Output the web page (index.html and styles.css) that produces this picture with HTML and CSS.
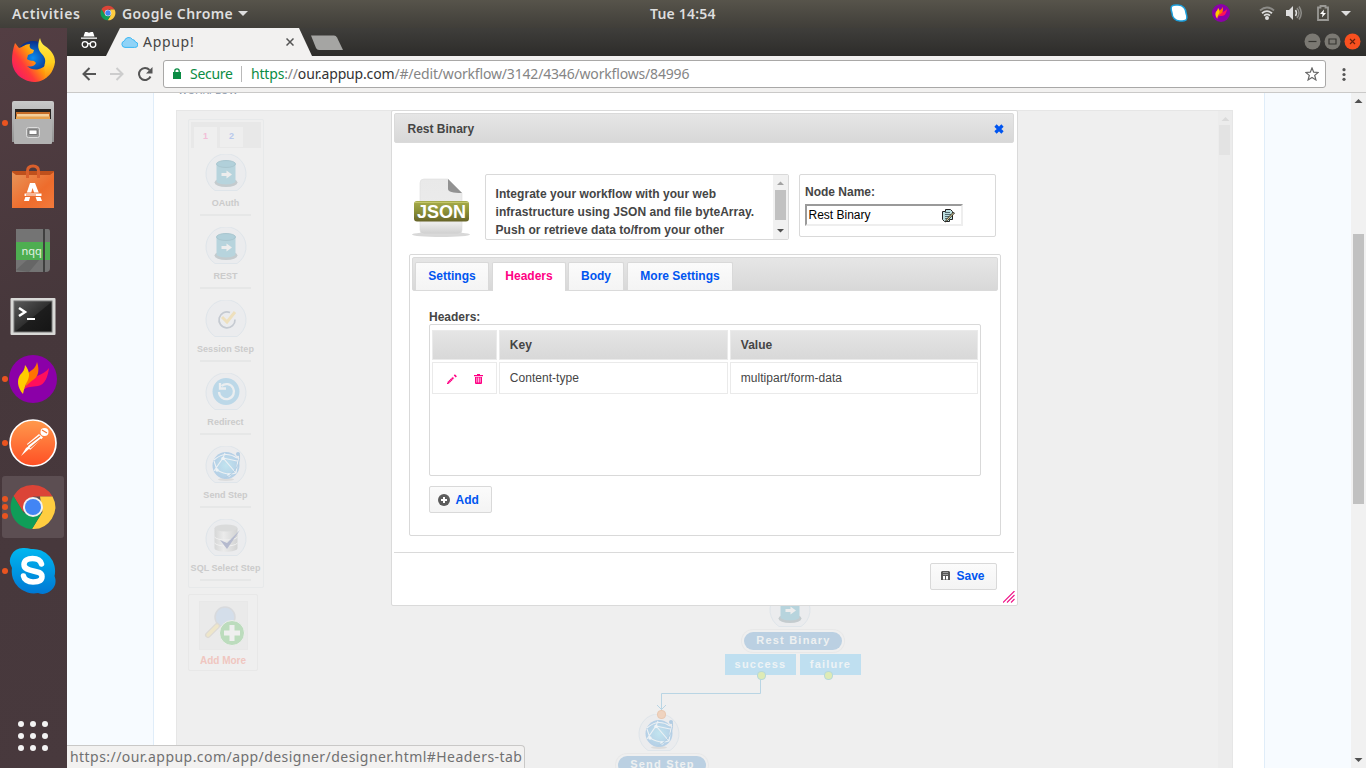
FILE: index.html
```html
<!DOCTYPE html>
<html lang="en">
<head>
<meta charset="utf-8">
<title>Appup!</title>
<link rel="stylesheet" href="styles.css">
</head>
<body>
<svg class="defs" width="0" height="0" aria-hidden="true">
  <defs>
    <linearGradient id="gPost" x1="0" y1="0" x2="0" y2="1"><stop offset="0" stop-color="#ff9a4d"/><stop offset="1" stop-color="#ff4f24"/></linearGradient>
    <linearGradient id="gSky" x1="0" y1="0" x2="0" y2="1"><stop offset="0" stop-color="#00b7f0"/><stop offset="1" stop-color="#0078d4"/></linearGradient>
    <linearGradient id="gFox" x1="0.1" y1="0.9" x2="0.95" y2="0.2"><stop offset="0" stop-color="#f5156c"/><stop offset=".35" stop-color="#ff3a3a"/><stop offset=".65" stop-color="#ff9a0a"/><stop offset="1" stop-color="#ffe83a"/></linearGradient>
    <linearGradient id="gTail" x1="0" y1="0" x2="0" y2="1"><stop offset="0" stop-color="#fff04a"/><stop offset=".6" stop-color="#ffcf1e"/><stop offset="1" stop-color="#ff8a10"/></linearGradient>
    <linearGradient id="gSteel" x1="0" y1="0" x2="0" y2="1"><stop offset="0" stop-color="#c9c9c9"/><stop offset="1" stop-color="#929292"/></linearGradient>
    <linearGradient id="gBag" x1="0" y1="0" x2="1" y2="1"><stop offset="0" stop-color="#e8955a"/><stop offset=".6" stop-color="#ee6c2c"/><stop offset="1" stop-color="#f27a3c"/></linearGradient>
    <linearGradient id="gTerm" x1="0" y1="0" x2="1" y2="1"><stop offset="0" stop-color="#5b5b5b"/><stop offset=".5" stop-color="#303030"/><stop offset=".52" stop-color="#1d1d1d"/><stop offset="1" stop-color="#151515"/></linearGradient>
    <linearGradient id="gOlive" x1="0" y1="0" x2="0" y2="1"><stop offset="0" stop-color="#a8ad4c"/><stop offset=".5" stop-color="#8b9138"/><stop offset="1" stop-color="#666328"/></linearGradient>
    <linearGradient id="gPage" x1="0" y1="0" x2="0" y2="1"><stop offset="0" stop-color="#e9e9e9"/><stop offset=".8" stop-color="#ececec"/><stop offset="1" stop-color="#cfcfcf"/></linearGradient>
    <linearGradient id="gDb" x1="0" y1="0" x2="1" y2="0"><stop offset="0" stop-color="#d6d7d7"/><stop offset=".4" stop-color="#ebebeb"/><stop offset="1" stop-color="#d2d3d3"/></linearGradient>
    <radialGradient id="gBlue"><stop offset="0" stop-color="#0a8df0"/><stop offset="1" stop-color="#0a2f8c"/></radialGradient>
    <radialGradient id="gGlobe"><stop offset="0" stop-color="#c1e4ef"/><stop offset="1" stop-color="#b5cfe6"/></radialGradient>
    <symbol id="chrome" viewBox="0 0 48 48">
      <path fill="#db4437" d="M24 2A22 22 0 0 1 43.5 13.5H24L14 29 4.5 13A22 22 0 0 1 24 2Z"/>
      <path fill="#ffcd40" d="M43.5 13.5A22 22 0 0 1 23 46L33.500 29 31 13.500Z"/>
      <path fill="#0f9d58" d="M4.500 13 14.500 29.500 24 34 33 29.500 23 46A22 22 0 0 1 4.500 13Z"/>
      <circle cx="24" cy="24" r="10" fill="#f1f1f1"/><circle cx="24" cy="24" r="8" fill="#4285f4"/>
    </symbol>
    <symbol id="flame" viewBox="0 0 48 48">
      <circle cx="24" cy="24" r="24" fill="#8b00a8"/>
      <path fill="#ff0f5c" d="M14 35c4-6 8-11 14-14 5-2 9-4 12-8-1 8-4 17-11 18-6 1-10 0-15 4Z"/>
      <path fill="#ff7200" d="M16 32c3-5 0-10 3-14 4-3 8-5 9-11 3 9 1 15-4 18-3 2-5 4-8 7Z"/>
      <path fill="#ffcb00" d="M14 39C8 32 8 25 11 20c3-3 5-6 5-10 5 6 5 12 2 17-2 4-3 7-4 12Z"/>
    </symbol>
    <symbol id="disc" viewBox="0 0 42 38"><path d="M10 36.500A20 20 0 1 1 32 36.500Z" fill="#ebecee" stroke="#dfe5ea"/></symbol>
    <symbol id="drum" viewBox="0 0 42 38">
      <use href="#disc"/>
      <ellipse cx="21" cy="28.500" rx="11.500" ry="4.500" fill="#c4cbce"/>
      <path d="M11.500 10v17c0 4.500 19 4.500 19 0V10Z" fill="#b7d4dd"/><ellipse cx="21" cy="10" rx="9.500" ry="3.500" fill="#b1d0da" stroke="#a9c6cf"/>
      <path d="M16.500 19h5v-2.500l5.500 4-5.500 4V22h-5Z" fill="#ededed"/>
    </symbol>
    <symbol id="globe" viewBox="0 0 42 38">
      <use href="#disc"/>
      <ellipse cx="21" cy="33.500" rx="8" ry="1.500" fill="#dcdcdc"/>
      <circle cx="21" cy="19.500" r="13.500" fill="url(#gGlobe)"/>
      <path d="M9 14Q20 4 32 12M9 25 18 12 31 27M12 24Q22 30 31 27L33 14M18 12 32 15M12 24 9 15M18 12 20 7" fill="none" stroke="#edf1f4" stroke-width="1.100"/>
      <g fill="#eef3f6"><circle cx="18" cy="12.500" r="1.700"/><circle cx="12" cy="24" r="1.700"/><circle cx="24" cy="29" r="1.700"/></g>
      <circle cx="33" cy="8" r="2" fill="#b1cce2"/><path d="M34.500 9c1 9-5 19-15 23" fill="none" stroke="#b4cee2"/>
    </symbol>
  </defs>
</svg>

<header class="topbar">
  <span class="top-act">Activities</span>
  <svg class="top-chrome" width="16" height="16"><use href="#chrome"/></svg>
  <span class="top-app">Google Chrome</span>
  <svg class="top-caret" width="10" height="5"><path d="M0 0h10L5 5Z" fill="#dedede"/></svg>
  <span class="top-clock">Tue 14:54</span>
  <div class="tray">
    <svg width="18" height="18" viewBox="0 0 18 18"><path d="M2 2C4 .5 6 1 8 1c5 0 8 4 8 8 1 3 1 6 0 7s-4 1-6 1C5 17 2 13 2 9 1 6 1 3 2 2Z" fill="#fff" stroke="#1c9fdc" stroke-width="1.500"/></svg>
    <svg class="tray-flame" width="18" height="18"><use href="#flame"/></svg>
    <svg class="tray-wifi" width="16" height="14" viewBox="0 0 16 14" fill="none" stroke-width="1.800"><path d="M1 4.500Q8-1.500 15 4.500" stroke="#8c8b87"/><path d="M3 7.300Q8 3 13 7.300M5 9.600Q8 7.300 11 9.600" stroke="#dedede"/><circle cx="8" cy="12" r="2" fill="#dedede"/></svg>
    <svg class="tray-vol" width="16" height="14" viewBox="0 0 16 14" fill="none" stroke-width="1.500"><path d="M0 4h3l4-4v14l-4-4H0Z" fill="#dedede"/><path d="M9.500 4q2 3 0 6" stroke="#dedede"/><path d="M11 2q4 5 0 10M13 .5q4.500 6.500 0 13" stroke="#8c8b87"/></svg>
    <svg class="tray-bat" width="12" height="16" viewBox="0 0 12 16"><path d="M1 2.500h2.500V1h5v1.500H11V15H1Z" fill="none" stroke="#9a9995" stroke-width="1.800"/><path d="M7 4.500 3 9h2.500L5 12.500 9 8H6.500Z" fill="#fff"/></svg>
    <svg class="tray-caret" width="10" height="5"><path d="M0 0h10L5 5Z" fill="#dedede"/></svg>
  </div>
</header>

<div class="desktop">
  <nav class="dock">
    <div class="dock-cell"><svg width="48" height="48" viewBox="0 0 48 48"><circle cx="24" cy="23" r="17" fill="url(#gBlue)"/><path d="M6 8c2 2 3 4 4 5 4-1 6-4 11-4-1 3 0 5 4 6l-1 3-5 2-1 4c3 3 6 0 9 4-2 4-6 4-9 3 6 6 16 4 20-3v14c-4 4-9 5-13 5C12 46 3 37 3 25c0-6 1-11 3-17Z" fill="url(#gFox)"/><path d="M31 3c1 4 2 6 5 8 6 4 10 9 10 16-1 8-5 14-11 17 3-7-1-11 1-16 1-4-1-7-4-10-4-5-3-10-1-15Z" fill="url(#gTail)"/></svg></div>
    <div class="dock-cell"><span class="dots"><i></i></span><svg width="48" height="48" viewBox="0 0 48 48"><path d="M3 4q0-2 2-2h38q2 0 2 2v39H3Z" fill="url(#gSteel)"/><path d="M6 10h36v10H6Z" fill="#272321"/><path d="M7 13h34v8H7Z" fill="#c66c27"/><path d="M8 15h32v6H8Z" fill="#f4cf9c"/><path d="M7 17.500h34v3H7Z" fill="#e8a250"/><rect x="5" y="20" width="38" height="25" rx="1" fill="#b2b2b2"/><rect x="17.500" y="28.500" width="13" height="10" rx="2" fill="#999" stroke="#ddd"/><rect x="20" y="31" width="8" height="4.500" fill="#fff" stroke="#555" stroke-width=".7"/></svg></div>
    <div class="dock-cell"><svg width="48" height="48" viewBox="0 0 48 48"><path d="M3 8h42v36H3Z" fill="#bf501c"/><path d="M3 9 7 12H41L45 9V45H3Z" fill="url(#gBag)"/><path d="M18.500 15V8q0-5 5.500-5t5.500 5v7" fill="none" stroke="#d95f2c" stroke-width="3"/><path d="M15 38 21 20h5l7 18h-5l-4.500-13L20 38Z" fill="#fff"/><path d="M15 30h18v3.500H15Z" fill="#fff" stroke="#ed6d2d"/><path d="M17 32h10" stroke="#ed6d2d"/></svg></div>
    <div class="dock-cell"><svg width="48" height="48" viewBox="0 0 48 48"><path d="M7 2h32q2 0 2 3v36q0 4-4 4H7Z" fill="#747474"/><path d="M7 15h34v18H7Z" fill="#4eae51"/><path d="M34 2h2v43h-2Z" fill="#404040"/><path d="M7 43 18 33h12L20 45" fill="#666"/><text x="12.500" y="28" class="nqq">nqq</text></svg></div>
    <div class="dock-cell"><svg width="48" height="48" viewBox="0 0 48 48"><rect x="1.500" y="7" width="45" height="37" rx="1" fill="#d9d9d7"/><rect x="5" y="10" width="38" height="31" fill="url(#gTerm)" stroke="#777"/><path d="m10 17 6 4-6 4" fill="none" stroke="#fff" stroke-width="2.500"/><path d="M18 28h8" stroke="#fff" stroke-width="2"/></svg></div>
    <div class="dock-cell"><span class="dots"><i></i></span><svg width="48" height="48"><use href="#flame"/></svg></div>
    <div class="dock-cell"><span class="dots"><i></i></span><svg width="48" height="48" viewBox="0 0 48 48"><circle cx="24" cy="24" r="23" fill="url(#gPost)" stroke="#fff" stroke-width="1.700"/><circle cx="35.500" cy="13" r="4" fill="#fff"/><path d="m18 25 12-10 4 3.500L21 31Z" fill="#fff"/><path d="m21 29-9 8 5-8 9-6" fill="#fff"/><path d="m18 27 13-10M21 29l11-9M33 11l5 3" stroke="#f37435" stroke-width="1.200"/></svg></div>
    <div class="dock-cell dock-on"><span class="dots"><i></i><i></i><i></i></span><svg width="48" height="48"><use href="#chrome"/></svg></div>
    <div class="dock-cell"><span class="dots"><i></i></span><svg width="48" height="48" viewBox="0 0 48 48"><path d="M14 1a24 24 0 0 1 8 1 22 22 0 0 1 23.500 27A13 13 0 0 1 29 46 22 22 0 0 1 3 21 13 13 0 0 1 14 1Z" fill="url(#gSky)"/><path d="M32.500 17c-1-4-5-5.500-9-5.500-5 0-8.500 2-8.500 6 0 9 18 4 18 12 0 4-4 5.500-9 5.500-5.500 0-9-3-9.500-6" fill="none" stroke="#fff" stroke-width="5.500" stroke-linecap="round"/></svg></div>
    <svg class="dock-grid" width="30" height="30" fill="#f3f3f3"><circle cx="3" cy="3" r="3"/><circle cx="15" cy="3" r="3"/><circle cx="27" cy="3" r="3"/><circle cx="3" cy="15" r="3"/><circle cx="15" cy="15" r="3"/><circle cx="27" cy="15" r="3"/><circle cx="3" cy="27" r="3"/><circle cx="15" cy="27" r="3"/><circle cx="27" cy="27" r="3"/></svg>
  </nav>

  <div class="browser">
    <div class="tabstrip">
      <svg class="incog" width="18" height="18" viewBox="0 0 18 18"><path d="M5 1h2l2 .7L11 1h2l1.500 4.500h-11Z" fill="#fff"/><path d="M1 6.500h16v1.300H1Z" fill="#fff"/><g fill="none" stroke="#fff" stroke-width="1.300"><circle cx="5" cy="13.500" r="2.800"/><circle cx="13" cy="13.500" r="2.800"/><path d="M7.500 13q1.500-1 3 0"/></g></svg>
      <div class="tab">
        <svg class="cloud" width="17" height="11" viewBox="0 0 17 11"><path d="M4 10.400a3.300 3.300 0 0 1-.6-6.500A4.500 4.500 0 0 1 11.500 2.500 3.500 3.500 0 0 1 14.500 5a2.700 2.700 0 0 1-.8 5.400Z" fill="#90d3f7" stroke="#3bb7f3"/></svg>
        <span class="tab-name">Appup!</span>
        <svg class="tab-x" width="8" height="8"><path d="m.5.5 7 7m0-7-7 7" stroke="#555" stroke-width="1.500"/></svg>
      </div>
      <svg class="newtab" width="33" height="16"><path d="M2 .5h21q2 0 3 2L32 15H8q-2 0-3-2L0 .5Z" fill="#a5a5a3"/></svg>
      <div class="winbtns">
        <svg width="17" height="17"><circle cx="8.500" cy="8.500" r="8" fill="#7b7973"/><path d="M4.500 8.500h8" stroke="#373632" stroke-width="1.200"/></svg>
        <svg width="17" height="17"><circle cx="8.500" cy="8.500" r="8" fill="#7b7973"/><path d="M5 6h7v5H5Z" fill="none" stroke="#373632" stroke-width="1.200"/></svg>
        <svg width="17" height="17"><circle cx="8.500" cy="8.500" r="8" fill="#f9501f"/><path d="m6 6 5 5m0-5-5 5" stroke="#69200c" stroke-width="1.200"/></svg>
      </div>
    </div>
    <div class="toolbar">
      <svg class="t-back" width="14" height="14" fill="none" stroke="#555" stroke-width="2"><path d="M14 7H1.500M7.500 1l-6 6 6 6"/></svg>
      <svg class="t-fwd" width="14" height="14" fill="none" stroke="#cdcdcd" stroke-width="2"><path d="M0 7h12.500M6.500 1l6 6-6 6"/></svg>
      <svg class="t-load" width="15" height="14" fill="none" stroke="#555" stroke-width="2"><path d="M12.500 9.500A6 6 0 1 1 11.500 3"/><path d="M14.500 0v6.500H8Z" fill="#555" stroke="none"/></svg>
      <div class="omni">
        <svg class="lock" width="8" height="11"><path d="M0 4h8v7H0Z" fill="#0b8c44"/><path d="M1.800 4V3a2.200 2.200 0 0 1 4.400 0v1" fill="none" stroke="#0b8c44" stroke-width="1.300"/></svg>
        <span class="secure">Secure</span><span class="omni-sep"></span>
        <span class="url"><b>https</b><i>://</i>our.appup.com<i>/#/edit/workflow/3142/4346/workflows/84996</i></span>
        <svg class="star" width="14" height="14" viewBox="0 0 14 14"><path d="m7 1 1.700 4.200 4.500.3-3.500 2.900 1.200 4.500L7 10.400l-3.900 2.500 1.200-4.500L.8 5.500l4.500-.3Z" fill="none" stroke="#666" stroke-width="1.200"/></svg>
      </div>
      <svg class="t-menu" width="4" height="13" fill="#555"><circle cx="2" cy="1.700" r="1.600"/><circle cx="2" cy="6.500" r="1.600"/><circle cx="2" cy="11.300" r="1.600"/></svg>
    </div>

    <div class="view">
      <main class="page">
        <div class="cut"><span>WORKFLOW</span></div>
        <div class="canvas">
          <aside class="side">
            <div class="palette">
              <div class="pal-tabs"><span class="pt on">1</span><span class="pt">2</span></div>
              <div class="step"><svg width="42" height="38"><use href="#drum"/></svg><span>OAuth</span></div>
              <div class="step"><svg width="42" height="38"><use href="#drum"/></svg><span>REST</span></div>
              <div class="step"><svg width="42" height="38"><use href="#disc"/><path d="M25 12.500a8 8 0 1 0 5 7" fill="none" stroke="#c5cad1" stroke-width="1.700"/><path d="m17 17 5 5 8-10" fill="none" stroke="#eee0bd" stroke-width="3"/></svg><span>Session Step</span></div>
              <div class="step"><svg width="42" height="38"><use href="#disc"/><circle cx="21" cy="18.500" r="13.500" fill="#bcd8e8"/><path d="M16.500 13a7.500 7.500 0 1 1-2.500 6" fill="none" stroke="#ebeef0" stroke-width="2.300"/><path d="M15 10v5.500h6" fill="none" stroke="#ebeef0" stroke-width="2.300"/></svg><span>Redirect</span></div>
              <div class="step"><svg width="42" height="38"><use href="#globe"/></svg><span>Send Step</span></div>
              <div class="step"><svg width="42" height="38"><use href="#disc"/><path d="M9.500 9v20c0 5 23 5 23 0V9Z" fill="url(#gDb)"/><ellipse cx="21" cy="9" rx="11.500" ry="3.500" fill="#dadbdb"/><path d="M9.500 18c3 4 20 4 23 0M9.500 24c3 4 20 4 23 0" fill="none" stroke="#f0f0f0"/><path d="m15 21 7 3L35 11 22 30Z" fill="#b5bace"/></svg><span>SQL Select Step</span></div>
            </div>
            <div class="addmore">
              <div class="am-box"><svg width="47" height="47"><circle cx="25" cy="15" r="10" fill="#d4deea" stroke="#d8dadd" stroke-width="1.500"/><path d="m17 24-9 9" stroke="#dddad4" stroke-width="6" stroke-linecap="round"/><path d="m17 24-9 9" stroke="#eee6ca" stroke-width="3.500" stroke-linecap="round"/><circle cx="32" cy="31" r="12.500" fill="#bcdcbd" stroke="#eee"/><path d="M32 23v16M24 31h16" stroke="#efefef" stroke-width="5"/></svg></div>
              <span>Add More</span>
            </div>
          </aside>
          <svg class="wires" width="110" height="50" fill="none" stroke="#b9d5e4"><path d="M104.500 3V22.500H5.500V40"/><path d="m1 34 4.500 4.500L10 34"/></svg>
          <div class="node n-rest"><svg width="42" height="38"><use href="#drum"/></svg><span class="pill">Rest Binary</span><div class="outs"><span>success<i></i></span><span>failure<i></i></span></div></div>
          <div class="node n-send"><i class="port-in"></i><svg width="42" height="38"><use href="#globe"/></svg><span class="pill">Send Step</span></div>
          <div class="cv-scroll"><svg width="15" height="13"><path d="M3.500 10h8L7.500 6Z" fill="#dadada"/></svg><div class="cv-thumb"></div></div>
        </div>
      </main>
      <div class="vscroll"><svg width="15" height="15"><path d="M3.500 10h8L7.500 6Z" fill="#505050"/></svg><div class="vthumb"></div><svg class="vdown" width="15" height="15"><path d="M3.500 5h8L7.500 9Z" fill="#505050"/></svg></div>

      <section class="dialog">
        <div class="dlg-title"><span>Rest Binary</span><svg width="10" height="10"><path d="m1.500 1.500 7 7m0-7-7 7" stroke="#0055f0" stroke-width="3.200"/></svg></div>
        <div class="intro">
          <svg class="json" width="60" height="64" viewBox="0 0 60 64"><ellipse cx="30" cy="60.500" rx="29" ry="2.500" fill="#d8d8d8"/><path d="M9 9q0-4 4-4h24L51 19v37q0 4-4 4H13q-4 0-4-4Z" fill="url(#gPage)" stroke="#ddd" stroke-width=".6"/><path d="M37 5v10q0 4 14 4Z" fill="#929292"/><rect x="3" y="27" width="55" height="20.500" rx="3" fill="url(#gOlive)"/><path d="M4 28.500h53" stroke="#c3c66b"/><text x="30.500" y="43.500" text-anchor="middle" class="json-t">JSON</text></svg>
          <div class="desc"><p>Integrate your workflow with your web infrastructure using JSON and file byteArray. Push or retrieve data to/from your other</p>
            <div class="d-scroll"><svg width="15" height="15"><path d="M4 10h7L7.500 6.500Z" fill="#a3a3a3"/></svg><div class="d-thumb"></div><svg width="15" height="20"><path d="M4 9h7L7.500 12.500Z" fill="#505050"/></svg></div>
          </div>
          <div class="nname"><label>Node Name:</label>
            <div class="fld"><span>Rest Binary</span><svg width="14" height="15" viewBox="0 0 14 15"><path d="M1.500 3.500h3v-2h5l2 2v8h-3v2h-5l-2-2Z" fill="#bcdfe0" stroke="#222"/><path d="M4 4.500h5M4 6.500h6M4 8.500h4M4 10.500h3" stroke="#52686e"/><path d="m13.500 5-7 7.500-2 1.500.8-2.500 6.700-7Z" fill="#efe3a4" stroke="#222" stroke-width=".9"/></svg></div>
          </div>
        </div>
        <div class="tabs">
          <div class="tabnav"><span class="w1">Settings</span><span class="w2 cur">Headers</span><span class="w3">Body</span><span class="w4">More Settings</span></div>
          <div class="panel">
            <div class="lbl">Headers:</div>
            <div class="gridbox">
              <div class="grid">
                <div class="th"></div><div class="th">Key</div><div class="th">Value</div>
                <div class="td ic"><svg width="10" height="10" viewBox="0 0 10 10" fill="none" stroke="#ff0084"><path d="M1 9 6.500 3.500" stroke-width="2.200" stroke-dasharray="1.600 .25"/><path d="M0 9.500h1.500" stroke-width="1"/><path d="m7.300.9 2 2" stroke-width="1.600"/></svg><svg width="9" height="10" viewBox="0 0 9 10" fill="#ff0084"><path d="M3 0h3v1h3v1.200H0V1h3ZM1 3h7v6q0 1-1 1H2q-1 0-1-1Z"/><path d="M2.800 3.500v5M4.500 3.500v5M6.200 3.500v5" stroke="#fff" stroke-width=".7"/></svg></div>
                <div class="td">Content-type</div><div class="td">multipart/form-data</div>
              </div>
            </div>
            <div class="btn add"><svg width="12" height="12"><circle cx="6" cy="6" r="6" fill="#5c5c5c"/><path d="M6 3v6M3 6h6" stroke="#fff" stroke-width="2"/></svg>Add</div>
          </div>
        </div>
        <div class="foot"><div class="btn save"><svg width="9" height="9"><path d="M1 0h7l1 1v8H0V1Z" fill="#555"/><path d="M2 1.500h5M2 3.500h5" stroke="#bbb" stroke-width=".7"/><path d="M2 5h2v3.500H2ZM5 5h2v3.500H5Z" fill="#fff"/></svg>Save</div></div>
        <svg class="grip" width="12" height="12"><path d="M0 11.500 11.500 0M4 11.500 11.500 4M8 11.500 11.500 8" stroke="#ef1187" stroke-width="1.100"/></svg>
      </section>
      <div class="status">https://our.appup.com/app/designer/designer.html#Headers-tab</div>
    </div>
  </div>
</div>
</body>
</html>
```
FILE: styles.css
```css
* { box-sizing: border-box; }
body { margin: 0; width: 1366px; height: 768px; overflow: hidden; font: 12px "Liberation Sans", Arial, sans-serif; color: #454545; }
svg { display: block; flex: none; }
.defs { position: absolute; }

.topbar { height: 28px; display: flex; align-items: center; background: linear-gradient(#57544b, #403e39); color: #dedede; font: 600 14px "Noto Sans", sans-serif; padding: 0 0 2px 12px; white-space: nowrap; }
.top-act { width: 68px; letter-spacing: 0.600px; }
.top-chrome { margin-left: 20px; }
.top-app { margin-left: 6px; width: 111px; letter-spacing: 0.400px; }
.top-caret { margin-left: 5px; }
.top-clock { margin-left: 402px; letter-spacing: 0.200px; }
.tray { margin-left: auto; display: flex; align-items: center; width: 196px; }
.tray-flame { margin-left: 24px; }
.tray-wifi { margin-left: 29px; }
.tray-vol { margin-left: 11px; }
.tray-bat { margin-left: 15px; }
.tray-caret { margin-left: 12px; }

.desktop { display: flex; height: 740px; }
.dock { width: 67px; flex: none; background: linear-gradient(160deg, #533e43, #46373b 40%, #48393d); display: flex; flex-direction: column; overflow: hidden; }
.dock-cell { height: 64px; flex: none; position: relative; padding: 8px 0 0 9px; }
.dock-cell:first-child { height: 63px; padding-top: 7px; }
.dock-on::before { content: ""; position: absolute; left: 2px; top: 1px; width: 62px; height: 62px; border-radius: 3px; background: #5c4e52; }
.dock-on svg { position: relative; }
.dots { position: absolute; left: 2px; top: 0; height: 64px; display: flex; flex-direction: column; justify-content: center; gap: 2.500px; z-index: 1; }
.dots i { width: 6px; height: 6px; border-radius: 50%; background: #e95420; }
.dock-grid { margin: 118px 0 0 18px; }
.nqq { font: 11px "Noto Sans", sans-serif; fill: #e5f2e5; }

.browser { flex: 1; display: flex; flex-direction: column; font-family: "Noto Sans", sans-serif; }
.tabstrip { height: 28px; background: linear-gradient(#3f3e3b, #2d2c2a); display: flex; }
.incog { margin: 3px 0 0 13px; }
.tab { width: 206px; height: 28px; margin-left: 8px; background: #f2f1f0; clip-path: polygon(14px 0, 193px 0, 206px 100%, 0 100%); display: flex; align-items: center; padding-left: 15px; }
.tab-name { margin: -2px 0 0 5px; width: 52px; font-size: 14px; letter-spacing: 0.700px; }
.tab-x { margin-left: 91px; }
.newtab { margin: 7px 0 0 -1px; }
.winbtns { margin: 5px 5px 0 auto; display: flex; gap: 3px; }
.toolbar { height: 37px; background: #f2f1f0; border-bottom: 1px solid #cac9c8; display: flex; align-items: center; }
.t-back { margin-left: 15px; }
.t-fwd { margin-left: 14px; }
.t-load { margin-left: 14px; }
.omni { margin: 0 0 0 10px; width: 1163px; height: 28px; border: 1px solid #a9a8a7; border-radius: 3px; background: #fff; display: flex; align-items: center; font-size: 14px; white-space: nowrap; padding-bottom: 1px; }
.lock { margin-left: 9px; }
.secure { color: #0b8c44; margin-left: 9px; width: 43px; letter-spacing: -0.300px; }
.omni-sep { width: 1px; height: 16px; background: #b9b9b9; margin: 0 9px 0 8px; }
.url { color: #333; letter-spacing: -0.175px; }
.url b { font-weight: 400; color: #0b8c44; }
.url i { font-style: normal; color: #858585; }
.star { margin-left: auto; margin-right: 6px; }
.t-menu { margin-left: 16px; }

.view { flex: 1; position: relative; display: flex; overflow: hidden; background: #f7fbff; font-family: "Liberation Sans", Arial, sans-serif; }
.page { margin-left: 86px; width: 1112px; background: #fff; border: solid #e0edf9; border-width: 0 1px; display: flex; flex-direction: column; padding-left: 22px; }
.cut { height: 17px; font-size: 10px; color: #8a97ab; }
.cut span { display: block; height: 12px; line-height: 12px; margin-top: -8px; padding-left: 2px; }
.canvas { width: 1057px; flex: 1; background: #efefef; border: 1px solid #e6e6e6; border-bottom: 0; position: relative; overflow: hidden; }
.side { padding: 8px 0 0 11px; }
.palette { width: 76px; height: 469px; border: 1px solid #e7e9ea; border-radius: 2px; padding: 2px; }
.pal-tabs { height: 26px; background: #e8e8e8; display: flex; gap: 3px; padding: 5px 0 0 3px; margin-bottom: 6px; }
.pt { width: 23px; height: 20px; background: #eee; color: #b8c9ec; font: bold 9px/18px "Liberation Sans", sans-serif; text-align: center; }
.pt.on { color: #f2bed7; height: 21px; background: #efefef; }
.step { height: 73px; display: flex; flex-direction: column; align-items: center; margin: 0 -4px 0 -5px; }
.step span, .addmore span { font: bold 9px/12px "Liberation Sans", sans-serif; color: #cbcbcb; white-space: nowrap; }
.step span { margin-top: 5px; letter-spacing: 0.030px; }
.step::after { content: ""; width: 51px; height: 2px; background: #e6e7e7; margin-top: 5px; }
.addmore { margin-top: 6px; width: 70px; height: 77px; border: 1px solid #e8e8e8; border-radius: 2px; padding: 6px 0 0 10px; }
.am-box { width: 49px; height: 49px; background: #eaeaea; border: 1px solid #e8e8e8; }
.addmore span { display: block; width: 68px; margin: 5px 0 0 -10px; text-align: center; font-size: 10px; color: #f0c6c0; }
.cv-scroll { position: absolute; right: 0; top: 0; width: 14px; height: 100%; background: #ececec; }
.cv-thumb { width: 11px; height: 30px; margin: 1px 0 0 1px; background: #e3e3e3; }
.wires { position: absolute; left: 479px; top: 560px; }
.node { position: absolute; display: flex; flex-direction: column; align-items: center; }
.n-rest { left: 548px; top: 479px; width: 136px; }
.n-send { left: 436px; top: 603px; width: 98px; }
.n-rest > svg { margin-left: -6px; }
.n-send > svg { margin-left: -6px; }
.pill { margin-top: 4px; height: 18px; border-radius: 9px; padding: 0 11px 0 12px; background: #bbd0e2; box-shadow: 0 0 0 2px #efefef, 0 0 0 3px #e8e8e8; color: #eef0f1; font: bold 11px/17px "Liberation Sans", sans-serif; letter-spacing: 1.200px; white-space: nowrap; }
.outs { display: flex; gap: 4px; margin-top: 4px; }
.outs span { position: relative; height: 21px; width: 71px; background: #bfdff0; color: #eef3f5; font: bold 11px/20px "Liberation Sans", sans-serif; letter-spacing: 1.200px; text-align: center; }
.outs span + span { width: 61px; }
.outs i, .port-in { position: absolute; width: 9px; height: 9px; border-radius: 4px; border: 1px solid #b5d8dc; background: #deebb5; left: 32px; bottom: -5px; z-index: 1; }
.outs span + span i { left: 24px; }
.port-in { background: #efd3bf; border-color: #e9c8b1; left: 44px; top: -4px; bottom: auto; }

.vscroll { position: absolute; right: 0; top: 0; width: 15px; height: 100%; background: #f1f1f1; display: flex; flex-direction: column; }
.vthumb { width: 11px; height: 270px; margin: 126px 0 0 2px; background: #c1c1c1; }
.vdown { margin-top: auto; }

.dialog { position: absolute; left: 324px; top: 17px; width: 627px; height: 496px; background: #fff; border: 1px solid #dadada; border-radius: 2px; padding: 2px; font-weight: bold; }
.dlg-title { height: 30px; width: 620px; background: linear-gradient(#e6e6e6, #d8d8d8); border: 1px solid #dadada; border-radius: 2px; display: flex; align-items: center; justify-content: space-between; padding: 1px 9px 0 12.500px; }
.intro { display: flex; padding: 31px 0 0 17px; }
.json-t { font: bold 18px "Liberation Sans", sans-serif; fill: #fff; }
.desc { margin-left: 14px; width: 304px; height: 66px; border: 1px solid #d9d9d9; border-radius: 2px; display: flex; overflow: hidden; }
.desc p { margin: 0; width: 287px; padding: 10px 5px 0 9.500px; line-height: 18px; letter-spacing: 0.050px; }
.d-scroll { width: 15px; background: #f1f1f1; }
.d-thumb { width: 11px; height: 30px; margin-left: 2px; background: #c1c1c1; }
.nname { margin-left: 10px; width: 197px; height: 63px; border: 1px solid #d9d9d9; border-radius: 2px; padding: 8px 0 0 5px; }
.nname label { display: block; line-height: 18px; }
.fld { margin-top: 3px; width: 158px; height: 22px; border: 2px solid; border-color: #9a9a9a #eee #eee #9a9a9a; display: flex; align-items: center; justify-content: space-between; padding: 0 6px 0 1.500px; color: #000; font-weight: 400; }
.tabs { margin: 14px 0 0 15px; width: 592px; height: 282px; border: 1px solid #d9d9d9; border-radius: 2px; padding: 2px; }
.tabnav { width: 586px; height: 34px; background: linear-gradient(#e6e6e6, #d8d8d8); border: 1px solid #dadada; border-radius: 2px; padding: 4px 0 0 2px; display: flex; gap: 3px; }
.tabnav span { height: 28px; border: 1px solid #d9d9d9; border-bottom: 0; border-radius: 2px 2px 0 0; background: linear-gradient(#fbfbfb, #f4f4f4); color: #0055f0; text-align: center; line-height: 27px; }
.tabnav .w1 { width: 74px; }
.tabnav .w2 { width: 74px; }
.tabnav .w3 { width: 56px; margin-left: -1px; }
.tabnav .w4 { width: 106px; }
.tabnav .cur { height: 29px; background: #fff; color: #ff0084; }
.panel { padding: 18px 0 0 17px; }
.lbl { height: 15px; line-height: 17px; }
.gridbox { width: 552px; height: 152px; border: 1px solid #d9d9d9; border-radius: 2px; padding: 5px 2px; }
.grid { display: grid; grid-template-columns: 65px 229px 248px; grid-template-rows: 30px 32px; gap: 2px; }
.th, .td { border: 1px solid #eaeaea; padding-left: 9.800px; line-height: 28px; }
.th { background: linear-gradient(#e5e5e5, #d8d8d8); }
.td { font-weight: 400; line-height: 30px; letter-spacing: 0.030px; }
.ic { display: flex; padding: 11px 0 0 14px; gap: 17px; }
.btn { height: 27px; border: 1px solid #d9d9d9; border-radius: 2px; background: linear-gradient(#fbfbfb, #f4f4f4); color: #0055f0; display: flex; align-items: center; }
.add { width: 63px; margin-top: 10px; padding-left: 8px; gap: 5.500px; }
.foot { margin-top: 16px; width: 620px; border-top: 1px solid #dadada; padding: 10px 17px 0 0; display: flex; justify-content: flex-end; }
.save { width: 67px; padding: 0 0 2px 10px; gap: 6.500px; }
.grip { position: absolute; right: 2px; bottom: 2px; }
.status { position: absolute; left: 0; bottom: 0; height: 23px; width: 458px; background: #f2f1f0; border: solid #c9c8c7; border-width: 1px 1px 0 0; border-radius: 0 4px 0 0; padding-left: 3px; font: 14px/22px "Noto Sans", sans-serif; color: #707070; white-space: nowrap; letter-spacing: 0.450px; }
```
